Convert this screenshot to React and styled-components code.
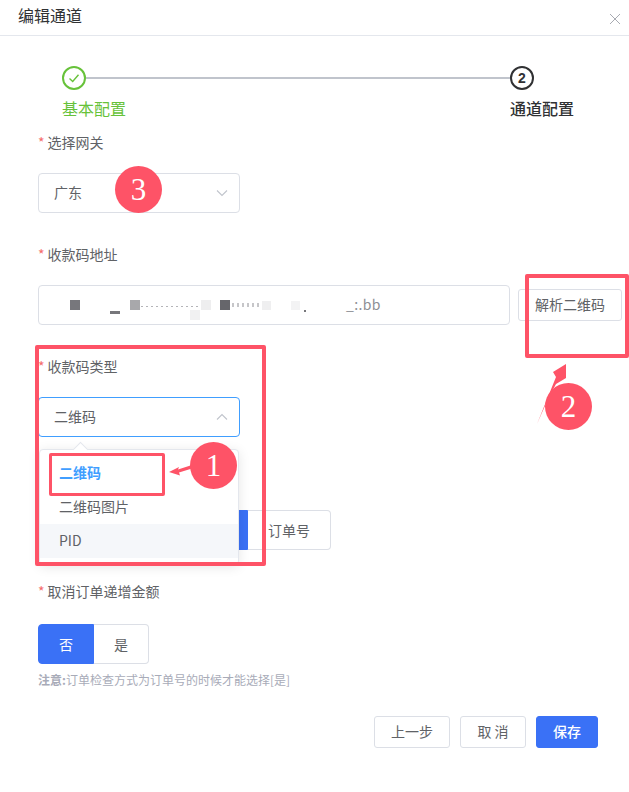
import React from "react";
import styled, { createGlobalStyle } from "styled-components";

const Global = createGlobalStyle`
  html, body { margin: 0; padding: 0; background: #fff; }
  body {
    font-family: "Noto Sans CJK SC", "Noto Sans", sans-serif;
    color: #606266;
  }
  * { box-sizing: border-box; }
`;

const Page = styled.div`
  position: relative;
  width: 629px;
  height: 792px;
  overflow: hidden;
`;

const Header = styled.header`
  height: 36px;
  padding: 0 9px 0 18px;
  border-bottom: 1px solid #e4e7ed;
  display: flex;
  justify-content: space-between;
`;

const Title = styled.h1`
  margin: 4px 0 0;
  font-size: 16px;
  line-height: 22px;
  font-weight: 400;
  color: #303133;
`;

const Close = styled.svg`
  width: 10px;
  height: 10px;
  margin-top: 14px;
  stroke: #a8abb2;
  stroke-width: 1;
  fill: none;
`;

const Steps = styled.div`
  display: flex;
  justify-content: space-between;
  padding: 30px 55px 0 62px;
  height: 89px;
`;

const Step = styled.div`
  display: flex;
  flex-direction: column;
  flex: ${(p) => (p.$grow ? 1 : "none")};
  color: ${(p) => (p.$done ? "#67c23a" : "#303133")};
`;

const StepHead = styled.div`
  display: flex;
  align-items: center;
  height: 24px;
`;

const Circle = styled.span`
  width: 24px;
  height: 24px;
  flex: none;
  border-radius: 50%;
  border: 2px solid currentColor;
  display: flex;
  align-items: center;
  justify-content: center;
  font-size: 14px;
  font-weight: 700;
  font-family: "Liberation Sans", sans-serif;
`;

const StepLine = styled.span`
  flex: 1;
  height: 2px;
  background: #c0c4cc;
`;

const StepLabel = styled.div`
  margin-top: 9px;
  font-size: 16px;
  line-height: 18px;
  font-weight: ${(p) => (p.$bold ? 500 : 400)};
`;

const Form = styled.div`
  padding-left: 38px;
`;

const Field = styled.div`
  position: relative;
  margin-top: ${(p) => p.$top || 0}px;
`;

const Label = styled.label`
  display: block;
  height: 20px;
  margin-bottom: ${(p) => p.$gap || 20}px;
  font-size: 14px;
  line-height: 18px;
  color: #606266;
  &::before {
    content: "*";
    margin-right: 3px;
    color: #f56c6c;
  }
`;

const Select = styled.div`
  width: 202px;
  height: 40px;
  padding: 0 15px 2px;
  display: flex;
  align-items: center;
  justify-content: space-between;
  border: 1px solid ${(p) => (p.$open ? "#409eff" : "#dcdfe6")};
  border-radius: 4px;
  font-size: 14px;
  color: #606266;
  svg {
    width: 12px;
    height: 12px;
    margin-right: -4px;
    margin-top: 2px;
    stroke: #c0c4cc;
    stroke-width: 1.1;
    fill: none;
  }
`;

const AddressRow = styled.div`
  display: flex;
  align-items: center;
  gap: 8px;
`;

const AddressBox = styled.div`
  position: relative;
  width: 472px;
  height: 40px;
  padding-left: 15px;
  display: flex;
  align-items: center;
  border: 1px solid #dcdfe6;
  border-radius: 4px;
  font-size: 14px;
  color: #8b8d92;
`;

const Smudge = styled.span`
  flex: none;
  width: ${(p) => p.$w}px;
  height: ${(p) => p.$h}px;
  margin-left: ${(p) => p.$left}px;
  margin-top: ${(p) => p.$down || 0}px;
  background: ${(p) => p.$c};
`;

const DotRun = styled(Smudge)`
  background: repeating-linear-gradient(
    90deg,
    ${(p) => p.$c} 0 2px,
    transparent 2px 5px
  );
`;

const AddressEnd = styled.span`
  margin-left: 40px;
  padding-bottom: 2px;
  font-size: 14px;
  color: #8d8f94;
  letter-spacing: 0.4px;
`;

const PlainButton = styled.button`
  width: ${(p) => p.$w}px;
  height: ${(p) => p.$h || 32}px;
  padding: 0 0 2px;
  border: 1px solid #dcdfe6;
  border-radius: 3px;
  background: #fff;
  font: inherit;
  font-size: 14px;
  color: #606266;
`;

const Dropdown = styled.div`
  position: absolute;
  top: 92px;
  left: 1px;
  width: 200px;
  height: 116px;
  padding: 6px 0;
  z-index: 2;
  background: #fff;
  border: 1px solid #e4e7ed;
  border-radius: 4px;
  box-shadow: 0 2px 12px rgba(0, 0, 0, 0.1);
  &::before {
    content: "";
    position: absolute;
    top: -6px;
    left: 35px;
    width: 10px;
    height: 10px;
    background: #fff;
    border-left: 1px solid #e4e7ed;
    border-top: 1px solid #e4e7ed;
    transform: rotate(45deg);
  }
`;

const Option = styled.div`
  height: 34px;
  padding-left: 19px;
  line-height: 32px;
  font-size: 14px;
  font-weight: ${(p) => (p.$active ? 700 : 400)};
  color: ${(p) => (p.$active ? "#409eff" : "#606266")};
  background: ${(p) => (p.$hover ? "#f5f7fa" : "transparent")};
`;

const Segments = styled.div`
  display: flex;
  margin-top: ${(p) => p.$top || 0}px;
  width: ${(p) => p.$w}px;
`;

const Segment = styled.div`
  flex: ${(p) => (p.$w ? `0 0 ${p.$w}px` : 1)};
  height: 40px;
  padding-bottom: 1px;
  display: flex;
  align-items: center;
  justify-content: center;
  font-size: 14px;
  color: ${(p) => (p.$on ? "#fff" : "#606266")};
  background: ${(p) => (p.$on ? "#3a71f6" : "#fff")};
  border: 1px solid ${(p) => (p.$on ? "#3a71f6" : "#dcdfe6")};
  border-left-width: ${(p) => (p.$on ? 1 : 0)}px;
  border-radius: ${(p) => (p.$on ? "4px 0 0 4px" : "0 4px 4px 0")};
`;

const Note = styled.p`
  margin: 7px 0 0;
  font-size: 12px;
  line-height: 17px;
  color: #a8abb8;
  b { font-weight: 700; }
`;

const Footer = styled.div`
  display: flex;
  justify-content: flex-end;
  gap: 10px;
  margin-top: 28px;
  padding-right: 31px;
`;

const PrimaryButton = styled.button`
  width: 62px;
  height: 32px;
  padding: 0 0 2px;
  border: 1px solid #3a71f6;
  border-radius: 3px;
  background: #3a71f6;
  font: inherit;
  font-size: 14px;
  font-weight: 500;
  color: #fff;
`;

/* screenshot annotations, drawn over the form */
const Frame = styled.div`
  position: absolute;
  z-index: 3;
  left: ${(p) => p.$x}px;
  top: ${(p) => p.$y}px;
  width: ${(p) => p.$w}px;
  height: ${(p) => p.$h}px;
  border: ${(p) => p.$t || 4}px solid #fe5367;
  border-radius: 2px;
`;

const Badge = styled.div`
  position: absolute;
  z-index: 4;
  left: ${(p) => p.$x}px;
  top: ${(p) => p.$y}px;
  width: 47px;
  height: 47px;
  border-radius: 50%;
  background: #fe5367;
  color: #fff;
  display: flex;
  align-items: center;
  justify-content: center;
  font-family: "Liberation Serif", serif;
  font-size: 31px;
`;

const Arrow = styled.svg`
  position: absolute;
  z-index: 3;
  left: ${(p) => p.$x}px;
  top: ${(p) => p.$y}px;
  fill: #fe5367;
`;

export default function App() {
  return (
    <Page>
      <Global />
      <Header>
        <Title>编辑通道</Title>
        <Close viewBox="0 0 10 10">
          <path d="M0 0 10 10M10 0 0 10" />
        </Close>
      </Header>

      <Steps>
        <Step $done $grow>
          <StepHead>
            <Circle>
              <svg width="12" height="12" viewBox="0 0 12 12" fill="none" stroke="currentColor" strokeWidth="1.4">
                <path d="M1.500 6.500 4.700 9.500 10.500 2.800" />
              </svg>
            </Circle>
            <StepLine />
          </StepHead>
          <StepLabel>基本配置</StepLabel>
        </Step>
        <Step>
          <StepHead>
            <Circle>2</Circle>
          </StepHead>
          <StepLabel $bold>通道配置</StepLabel>
        </Step>
      </Steps>

      <Form>
        <Field $top={8}>
          <Label>选择网关</Label>
          <Select>
            广东
            <svg viewBox="0 0 12 12">
              <path d="M1 3.500 6 8.500 11 3.500" />
            </svg>
          </Select>
        </Field>

        <Field $top={32}>
          <Label>收款码地址</Label>
          <AddressRow>
            {/* the address is blurred out in the picture */}
            <AddressBox>
              <Smudge $w={10} $h={10} $left={16} $c="#77777c" />
              <Smudge $w={10} $h={3} $left={30} $c="#77777b" $down={14} />
              <Smudge $w={10} $h={10} $left={10} $c="#a8a8ab" />
              <DotRun $w={60} $h={1} $left={1} $c="#b4b4b8" $down={3} />
              <Smudge $w={10} $h={10} $left={-11} $c="#f1f1f2" $down={20} />
              <Smudge $w={10} $h={10} $left={1} $c="#eeeeef" />
              <Smudge $w={10} $h={10} $left={9} $c="#66666b" />
              <DotRun $w={30} $h={4} $left={2} $c="#c6c6c9" />
              <Smudge $w={9} $h={9} $left={0} $c="#efeff0" />
              <Smudge $w={9} $h={9} $left={20} $c="#f3f3f4" />
              <Smudge $w={2} $h={2} $left={4} $c="#77777b" $down={12} />
              <AddressEnd>_:.bb</AddressEnd>
            </AddressBox>
            <PlainButton $w={104}>解析二维码</PlainButton>
          </AddressRow>
        </Field>

        <Field $top={32}>
          <Label>收款码类型</Label>
          <Select $open>
            二维码
            <svg viewBox="0 0 12 12">
              <path d="M1 8.500 6 3.500 11 8.500" />
            </svg>
          </Select>
          <Dropdown>
            <Option $active>二维码</Option>
            <Option>二维码图片</Option>
            <Option $hover>PID</Option>
          </Dropdown>
          <Segments $top={73} $w={293}>
            <Segment $on $w={210} />
            <Segment>订单号</Segment>
          </Segments>
        </Field>

        <Field $top={32}>
          <Label $gap={22}>取消订单递增金额</Label>
          <Segments $w={111}>
            <Segment $on $w={56}>否</Segment>
            <Segment>是</Segment>
          </Segments>
          <Note><b>注意:</b>订单检查方式为订单号的时候才能选择[是]</Note>
        </Field>
      </Form>

      <Footer>
        <PlainButton $w={76}>上一步</PlainButton>
        <PlainButton $w={66}>取 消</PlainButton>
        <PrimaryButton>保存</PrimaryButton>
      </Footer>

      <Frame $x={35} $y={345} $w={231} $h={221} />
      <Frame $x={49} $y={453} $w={116} $h={43} $t={3} />
      <Frame $x={525} $y={274} $w={104} $h={84} />

      <Arrow $x={168} $y={460} width="26" height="16" viewBox="0 0 26 16">
        <path d="M1 12 11 7 10 9.500 24 5 24 8.500 11 12.500 12 15.500Z" />
      </Arrow>
      <Arrow $x={536} $y={364} width="34" height="62" viewBox="0 0 34 62">
        <path d="M30 0 17 8 20 13 1 60 12 35 20 20 30 14Z" />
      </Arrow>

      <Badge $x={190} $y={442}>1</Badge>
      <Badge $x={545} $y={383}>2</Badge>
      <Badge $x={115} $y={166}>3</Badge>
    </Page>
  );
}
